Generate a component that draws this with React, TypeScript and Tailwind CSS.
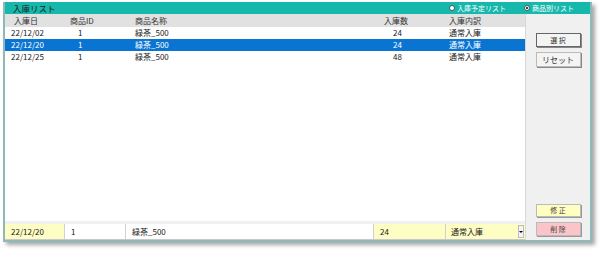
import React from "react";

const rows = [
  { d: "22/12/02", id: "1", name: "緑茶_500", q: "24", k: "通常入庫", sel: false },
  { d: "22/12/20", id: "1", name: "緑茶_500", q: "24", k: "通常入庫", sel: true },
  { d: "22/12/25", id: "1", name: "緑茶_500", q: "48", k: "通常入庫", sel: false },
];

const font = { fontFamily: '"Noto Sans CJK JP", "Noto Sans", sans-serif' };

export default function App() {
  return (
    <div className="w-[602px] h-[258px] bg-white pt-[2px] pl-[3px]" style={font}>
      <div className="w-[589px] h-[240px] border-[2px] border-[#8fb8b8] border-t-0 flex flex-col shadow-[3px_3px_4px_rgba(0,0,0,0.35)] text-[8px] leading-none text-[#222]">
        <div className="h-[12px] bg-[#17b8ac] flex items-center pl-[8px] pr-[6px] shrink-0">
          <span className="text-[#1a1a1a] text-[8.5px]">入庫リスト</span>
          <div className="ml-auto flex items-center gap-[18px] text-[7px]">
            <div className="flex items-center gap-[2px]">
              <span className="w-[6px] h-[6px] rounded-full bg-white border border-[#555]" />
              <span className="text-white">入庫予定リスト</span>
            </div>
            <div className="flex items-center gap-[2px] mr-[10px]">
              <span className="w-[6px] h-[6px] rounded-full bg-white border border-[#555] flex items-center justify-center">
                <span className="w-[2px] h-[2px] rounded-full bg-black" />
              </span>
              <span className="text-white">商品別リスト</span>
            </div>
          </div>
        </div>
        <div className="flex flex-1 min-h-0">
          <div className="flex flex-col w-[520px]">
            <div className="flex-1 bg-white flex flex-col">
              <div className="h-[13px] bg-[#e1e1e1] flex items-center text-[#333] shrink-0">
                <span className="w-[59px] pl-[9px]">入庫日</span>
                <span className="w-[62px] pl-[6px]">商品ID</span>
                <span className="w-[249px] pl-[9px]">商品名称</span>
                <span className="w-[72px] pl-[9px]">入庫数</span>
                <span className="pl-[2px]">入庫内訳</span>
              </div>
              {rows.map((r, i) => (
                <div
                  key={i}
                  className={`h-[12px] flex items-center ${r.sel ? "bg-[#0a74d2] text-white" : "text-[#222]"}`}
                >
                  <span className="w-[59px] pl-[6px]">{r.d}</span>
                  <span className="w-[62px] pl-[14px]">{r.id}</span>
                  <span className="w-[249px] pl-[9px]">{r.name}</span>
                  <span className="w-[72px] pl-[18px]">{r.q}</span>
                  <span className="pl-[2px]">{r.k}</span>
                </div>
              ))}
            </div>
            <div className="h-[3px] bg-[#f0f0f0]" />
            <div className="h-[16px] flex bg-[#f0f0f0] border-b border-[#c8c8c8] shrink-0">
              <div className="w-[60px] bg-[#fdfdc4] flex items-center pl-[6px] border-r border-[#d0d0d0]">22/12/20</div>
              <div className="w-[61px] bg-white flex items-center pl-[6px] border-r border-[#d0d0d0]">1</div>
              <div className="w-[248px] bg-white flex items-center pl-[6px] border-r border-[#d0d0d0]">緑茶_500</div>
              <div className="w-[72px] bg-[#fdfdc4] flex items-center pl-[6px] border-r border-[#d0d0d0]">24</div>
              <div className="flex-1 bg-[#fdfdc4] flex items-center pl-[5px] relative">
                通常入庫
                <span className="absolute right-[1px] top-[1px] bottom-[1px] w-[6px] bg-[#f4f4f4] border border-[#bbb] flex items-center justify-center">
                  <span className="w-0 h-0 border-l-[2px] border-r-[2px] border-t-[2px] border-l-transparent border-r-transparent border-t-black" />
                </span>
              </div>
            </div>
          </div>
          <div className="flex-1 bg-[#f0f0f0] flex flex-col items-center pt-[19px] pb-[4px] border-l border-[#d8d8d8]">
            <button className="w-[45px] h-[14px] bg-[#f4f4f4] border border-[#666] text-[7px] text-[#333] flex items-center justify-center shadow-[1px_1px_0_#888]">選 択</button>
            <button className="mt-[5px] w-[45px] h-[15px] bg-[#f4f4f4] border border-[#bbb] text-[8px] text-[#333] flex items-center justify-center shadow-[1px_1px_0_#888]">リセット</button>
            <div className="flex-1" />
            <button className="w-[45px] h-[13px] bg-[#ffffc0] border border-[#bbb] text-[7px] text-[#444] flex items-center justify-center shadow-[1px_1px_0_#999]">修 正</button>
            <button className="mt-[5px] w-[45px] h-[14px] bg-[#fbc4c8] border border-[#bbb] text-[7px] text-[#444] flex items-center justify-center shadow-[1px_1px_0_#999]">削 除</button>
          </div>
        </div>
      </div>
    </div>
  );
}
